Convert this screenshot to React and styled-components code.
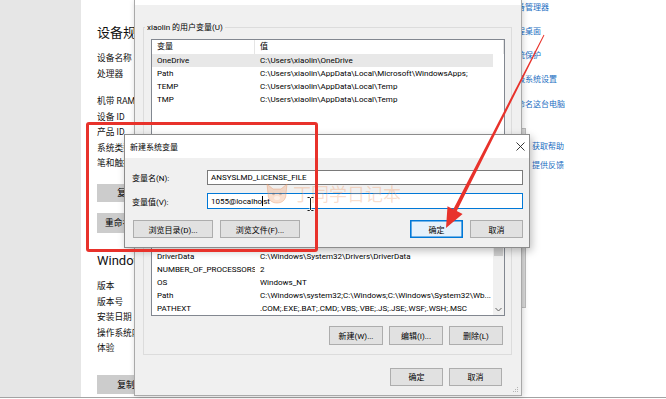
import React from 'react'
import styled, { createGlobalStyle } from 'styled-components'

const GlobalStyle = createGlobalStyle`
  html, body { margin: 0; padding: 0; background: #fff; }
  body { font-family: Roboto, "Noto Sans CJK SC", sans-serif; color: #000; }
  * { box-sizing: border-box; }
`

const Screen = styled.div`
  position: relative;
  width: 666px;
  height: 399px;
  overflow: hidden;
  display: flex;
  flex-direction: column;
  background: #fff;
`

const Page = styled.div`
  display: flex;
  height: 397px;
`

const BottomEdge = styled.div`
  height: 2px;
  border-top: 1px solid #a3a3a3;
  background: #fff;
`

const Sidebar = styled.div`
  width: 81px;
  flex: none;
  background: #e6e6e6;
`

const Content = styled.div`
  width: 428px;
  flex: none;
  padding: 24px 0 0 16px;
  font-size: 8.7px;
  color: #111;
`

const Heading = styled.h2`
  margin: 0;
  margin-top: ${p => p.$mt || 0}px;
  height: 18px;
  line-height: 18px;
  font-size: 13px;
  font-weight: 400;
  white-space: nowrap;
`

const SpecList = styled.div`
  display: flex;
  flex-direction: column;
  margin-top: 9.25px;
`

const SpecRow = styled.div`
  height: 15.5px;
  line-height: 15.5px;
  white-space: nowrap;
  margin-bottom: ${p => p.$gap || 0}px;
`

const PageButton = styled.button`
  display: block;
  height: ${p => p.$h}px;
  min-width: 58px;
  margin-top: ${p => p.$mt}px;
  padding: 0 8px;
  border: none;
  background: #cccccc;
  font: inherit;
  font-size: 8.7px;
  color: #000;
  white-space: nowrap;
`

const Links = styled.div`
  flex: 1;
  display: flex;
  flex-direction: column;
  padding-top: 2px;
  font-size: 8px;
`

const Link = styled.a`
  display: flex;
  align-items: center;
  gap: 11px;
  height: 12px;
  line-height: 12px;
  margin-top: ${p => p.$mt || 0}px;
  color: #1b6ec2;
  text-decoration: none;
  white-space: nowrap;
`

const LinkIcon = styled.span`
  width: 12px;
  height: 10px;
  border: 1px solid #1b6ec2;
  border-radius: 50%;
`

/* ---------- env variables window ---------- */

const EnvWindow = styled.div`
  position: absolute;
  left: 134px;
  top: 0;
  width: 388px;
  height: 396px;
  display: flex;
  flex-direction: column;
  background: #f0f0f0;
  border: 1px solid #a9a9a9;
  border-top: none;
  box-shadow: 1px 1px 6px rgba(0, 0, 0, 0.18);
  font-size: 8px;
`

const TitleStrip = styled.div`
  height: 5px;
  background: #fff;
`

const Group = styled.fieldset`
  margin: ${p => p.$mt}px 9px 0 8px;
  padding: 0;
  border: 1px solid #dcdcdc;
  min-width: 0;
`

const Legend = styled.legend`
  margin-left: 1px;
  padding: 0 2px;
  line-height: 11px;
  font-size: 8px;
`

const GroupBody = styled.div`
  padding: ${p => p.$pt}px 6px 9.5px 7px;
  display: flex;
  flex-direction: column;
`

const ListBox = styled.div`
  display: flex;
  height: ${p => p.$h}px;
  background: #fff;
  border: 1px solid #828790;
  overflow: hidden;
`

const ListMain = styled.div`
  flex: 1;
  min-width: 0;
`

const ListHeader = styled.div`
  display: flex;
  height: 14px;
  line-height: 14px;
`

const HeaderCell = styled.div`
  width: ${p => (p.$w ? `${p.$w}px` : 'auto')};
  flex: ${p => (p.$w ? 'none' : 1)};
  padding-left: 5px;
  border-right: 1px solid #e5e5e5;
`

const ListRow = styled.div`
  display: flex;
  height: 13px;
  line-height: 13px;
  background: ${p => (p.$selected ? '#e8e8e8' : 'transparent')};
  margin-right: ${p => (p.$selected ? '11px' : 0)};
`

const NameCell = styled.div`
  width: 103px;
  flex: none;
  padding-left: 5px;
  white-space: nowrap;
  overflow: hidden;
`

const ValueCell = styled.div`
  flex: 1;
  padding-left: 5px;
  white-space: nowrap;
  overflow: hidden;
`

const ScrollBar = styled.div`
  width: 11px;
  flex: none;
  display: flex;
  flex-direction: column;
  background: #f0f0f0;
`

const ScrollArrow = styled.div`
  height: 11px;
  display: flex;
  align-items: center;
  justify-content: center;
  margin-top: ${p => (p.$bottom ? 'auto' : 0)};
`

const ScrollThumb = styled.div`
  height: 21px;
  margin: 1px 1px 0;
  background: #cdcdcd;
`

const ButtonRow = styled.div`
  display: flex;
  justify-content: ${p => p.$justify || 'flex-end'};
  gap: ${p => p.$gap || 6}px;
  margin-top: ${p => p.$mt || 0}px;
  padding-right: ${p => p.$pr || 0}px;
  padding-left: ${p => p.$pl || 0}px;
`

const Button = styled.button`
  width: ${p => p.$w}px;
  height: ${p => p.$h}px;
  padding: 0;
  background: ${p => (p.$focus ? '#e5f1fb' : '#e1e1e1')};
  border: 1px solid ${p => (p.$focus ? '#0078d7' : '#adadad')};
  box-shadow: ${p => (p.$focus ? 'inset 0 0 0 0.6px #0078d7' : 'none')};
  font: inherit;
  font-size: 8px;
  color: #000;
  white-space: nowrap;
`

const Grip = styled.svg`
  position: absolute;
  right: 2px;
  bottom: 2px;
`

/* ---------- new variable dialog ---------- */

const NewVarDialog = styled.div`
  position: absolute;
  left: 124px;
  top: 134px;
  width: 406px;
  height: 114px;
  display: flex;
  flex-direction: column;
  border: 1px solid #8c8c8c;
  background: #f0f0f0;
  box-shadow: 2px 3px 8px rgba(0, 0, 0, 0.25);
  font-size: 8px;
`

const DialogTitle = styled.div`
  height: 23px;
  display: flex;
  align-items: center;
  justify-content: space-between;
  padding: 0 4px 0 5px;
  background: #fff;
`

const DialogBody = styled.div`
  flex: 1;
  padding: 12px 6px 9px 7px;
  display: flex;
  flex-direction: column;
`

const FieldRow = styled.div`
  display: flex;
  align-items: center;
  height: ${p => p.$h}px;
  margin-top: ${p => p.$mt || 0}px;
`

const FieldLabel = styled.label`
  width: 75px;
  flex: none;
  white-space: nowrap;
`

const TextBox = styled.div`
  flex: 1;
  height: 100%;
  display: flex;
  align-items: center;
  padding-left: 3px;
  background: #fff;
  border: 1px solid ${p => (p.$focus ? '#0078d7' : '#7a7a7a')};
  white-space: nowrap;
`

const Caret = styled.span`
  display: inline-block;
  width: 1px;
  height: 10px;
  background: #000;
  vertical-align: middle;
`

const Spacer = styled.div`
  flex: 1;
`

/* ---------- overlays ---------- */

const Watermark = styled.div`
  position: absolute;
  left: 264px;
  top: 182px;
  display: flex;
  align-items: center;
  gap: 3px;
  font-family: "Noto Sans CJK SC", sans-serif;
  font-size: 18px;
  line-height: 22px;
  color: rgba(240, 150, 95, 0.32);
  pointer-events: none;
`

const RedBox = styled.div`
  position: absolute;
  left: 86px;
  top: 122px;
  width: 232px;
  height: 130px;
  border: 3px solid #e8322b;
  border-radius: 3px;
`

const Overlay = styled.svg`
  position: absolute;
  left: 0;
  top: 0;
  pointer-events: none;
`

const PageScroll = styled.div`
  position: absolute;
  left: 521px;
  top: 128px;
  width: 5px;
  height: 180px;
  background: #dadada;
  border: 1px solid #bdbdbd;
`

const IBeam = styled.svg`
  position: absolute;
  left: 307px;
  top: 197px;
`

const userVars = [
  ['OneDrive', 'C:\\Users\\xiaolin\\OneDrive'],
  ['Path', 'C:\\Users\\xiaolin\\AppData\\Local\\Microsoft\\WindowsApps;'],
  ['TEMP', 'C:\\Users\\xiaolin\\AppData\\Local\\Temp'],
  ['TMP', 'C:\\Users\\xiaolin\\AppData\\Local\\Temp'],
]

const sysVars = [
  ['ComSpec', 'C:\\Windows\\system32\\cmd.exe'],
  ['DriverData', 'C:\\Windows\\System32\\Drivers\\DriverData'],
  ['NUMBER_OF_PROCESSORS', '2'],
  ['OS', 'Windows_NT'],
  ['Path', 'C:\\Windows\\system32;C:\\Windows;C:\\Windows\\System32\\Wb...'],
  ['PATHEXT', '.COM;.EXE;.BAT;.CMD;.VBS;.VBE;.JS;.JSE;.WSF;.WSH;.MSC'],
]

const Chevron = ({ up }) => (
  <svg width="7" height="5" viewBox="0 0 7 5">
    <path d={up ? 'M0.5 4L3.5 1L6.5 4' : 'M0.5 1L3.5 4L6.5 1'} fill="none" stroke="#606060" strokeWidth="1" />
  </svg>
)

const VarList = ({ rows, height, selected, scroll }) => (
  <ListBox $h={height}>
    <ListMain>
      <ListHeader>
        <HeaderCell $w={103}>变量</HeaderCell>
        <HeaderCell>值</HeaderCell>
      </ListHeader>
      {rows.map(([name, value], i) => (
        <ListRow key={name + i} $selected={i === selected}>
          <NameCell>{name}</NameCell>
          <ValueCell>{value}</ValueCell>
        </ListRow>
      ))}
    </ListMain>
    {scroll && (
      <ScrollBar>
        <ScrollArrow><Chevron up /></ScrollArrow>
        <ScrollThumb />
        <ScrollArrow $bottom><Chevron /></ScrollArrow>
      </ScrollBar>
    )}
  </ListBox>
)

const Dog = () => (
  <svg width="26" height="22" viewBox="0 0 26 22">
    <g fill="rgba(240,150,95,0.3)" stroke="rgba(230,140,85,0.35)" strokeWidth="1">
      <path d="M3 2L9 7L17 7L23 2L22 12C22 18 18 21 13 21C8 21 4 18 4 12Z" />
    </g>
    <circle cx="9.5" cy="12" r="1.3" fill="rgba(120,80,60,0.3)" />
    <circle cx="16.5" cy="12" r="1.3" fill="rgba(120,80,60,0.3)" />
    <ellipse cx="13" cy="16" rx="3" ry="2" fill="rgba(255,255,255,0.5)" />
  </svg>
)

export default function App() {
  return (
    <>
      <GlobalStyle />
      <Screen>
        <Page>
          <Sidebar />
          <Content>
            <Heading>设备规格</Heading>
            <SpecList>
              <SpecRow>设备名称</SpecRow>
              <SpecRow $gap={11.75}>处理器</SpecRow>
              <SpecRow>机带 RAM</SpecRow>
              <SpecRow>设备 ID</SpecRow>
              <SpecRow>产品 ID</SpecRow>
              <SpecRow>系统类型</SpecRow>
              <SpecRow>笔和触控</SpecRow>
            </SpecList>
            <PageButton $h={18} $mt={12.25}>复制</PageButton>
            <PageButton $h={20} $mt={11}>重命名这台电脑</PageButton>
            <Heading $mt={19}>Windows 规格</Heading>
            <SpecList>
              <SpecRow>版本</SpecRow>
              <SpecRow>版本号</SpecRow>
              <SpecRow>安装日期</SpecRow>
              <SpecRow>操作系统内部版本</SpecRow>
              <SpecRow>体验</SpecRow>
            </SpecList>
            <PageButton $h={19} $mt={18.25}>复制</PageButton>
          </Content>
          <Links>
            <Link>设备管理器</Link>
            <Link $mt={12}>远程桌面</Link>
            <Link $mt={12}>系统保护</Link>
            <Link $mt={12}>高级系统设置</Link>
            <Link $mt={12.5}>重命名这台电脑</Link>
            <Link $mt={30.5}><LinkIcon />获取帮助</Link>
            <Link $mt={7}><LinkIcon />提供反馈</Link>
          </Links>
        </Page>
        <BottomEdge />

        <PageScroll />

        <EnvWindow>
          <TitleStrip />
          <Group $mt={16.5}>
            <Legend>xiaolin 的用户变量(U)</Legend>
            <GroupBody $pt={6.5}>
              <VarList rows={userVars} height={120} selected={0} />
              <ButtonRow $mt={10} $pr={2}>
                <Button $w={54} $h={19}>新建(N)...</Button>
                <Button $w={54} $h={19}>编辑(E)...</Button>
                <Button $w={54} $h={19}>删除(D)</Button>
              </ButtonRow>
            </GroupBody>
          </Group>
          <Group $mt={6}>
            <Legend>系统变量(S)</Legend>
            <GroupBody $pt={6}>
              <VarList rows={sysVars} height={94} scroll />
              <ButtonRow $mt={10} $pr={2}>
                <Button $w={54} $h={19}>新建(W)...</Button>
                <Button $w={54} $h={19}>编辑(I)...</Button>
                <Button $w={54} $h={19}>删除(L)</Button>
              </ButtonRow>
            </GroupBody>
          </Group>
          <ButtonRow $mt={12.5} $pr={19}>
            <Button $w={53} $h={18}>确定</Button>
            <Button $w={53} $h={18}>取消</Button>
          </ButtonRow>
          <Grip width="6" height="6" viewBox="0 0 6 6">
            <g fill="#b5b5b5">
              <rect x="4" y="0" width="1" height="1" />
              <rect x="2" y="2" width="1" height="1" />
              <rect x="4" y="2" width="1" height="1" />
              <rect x="0" y="4" width="1" height="1" />
              <rect x="2" y="4" width="1" height="1" />
              <rect x="4" y="4" width="1" height="1" />
            </g>
          </Grip>
        </EnvWindow>

        <NewVarDialog>
          <DialogTitle>
            <span>新建系统变量</span>
            <svg width="9" height="9" viewBox="0 0 9 9">
              <path d="M0.5 0.5L8.5 8.5M8.5 0.5L0.5 8.5" stroke="#222" strokeWidth="0.9" />
            </svg>
          </DialogTitle>
          <DialogBody>
            <FieldRow $h={15}>
              <FieldLabel>变量名(N):</FieldLabel>
              <TextBox>ANSYSLMD_LICENSE_FILE</TextBox>
            </FieldRow>
            <FieldRow $h={16} $mt={8}>
              <FieldLabel>变量值(V):</FieldLabel>
              <TextBox $focus>
                1055@localho<Caret />st
              </TextBox>
            </FieldRow>
            <ButtonRow $mt={11} $justify="flex-start" $gap={7} $pl={1}>
              <Button $w={80} $h={18}>浏览目录(D)...</Button>
              <Button $w={80} $h={18}>浏览文件(F)...</Button>
              <Spacer />
              <Button $w={53} $h={18} $focus>确定</Button>
              <Button $w={53} $h={18}>取消</Button>
            </ButtonRow>
          </DialogBody>
        </NewVarDialog>

        <Watermark>
          <Dog />
          <span>丁同学日记本</span>
        </Watermark>

        <IBeam width="7" height="14" viewBox="0 0 7 14">
          <path d="M0.5 0.5H2.5L3.5 1.5L4.5 0.5H6.5M3.5 1.5V12.5M0.5 13.5H2.5L3.5 12.5L4.5 13.5H6.5" fill="none" stroke="#fff" strokeWidth="2" />
          <path d="M0.5 0.5H2.5L3.5 1.5L4.5 0.5H6.5M3.5 1.5V12.5M0.5 13.5H2.5L3.5 12.5L4.5 13.5H6.5" fill="none" stroke="#000" strokeWidth="0.9" />
        </IBeam>

        <RedBox />

        <Overlay width="666" height="399" viewBox="0 0 666 399">
          <polygon
            points="544.4,35.2 456.8,211.1 462.6,214.0 446,228 447.5,206.3 453.3,209.3 543.6,34.8"
            fill="#e8322b"
          />
        </Overlay>
      </Screen>
    </>
  )
}
